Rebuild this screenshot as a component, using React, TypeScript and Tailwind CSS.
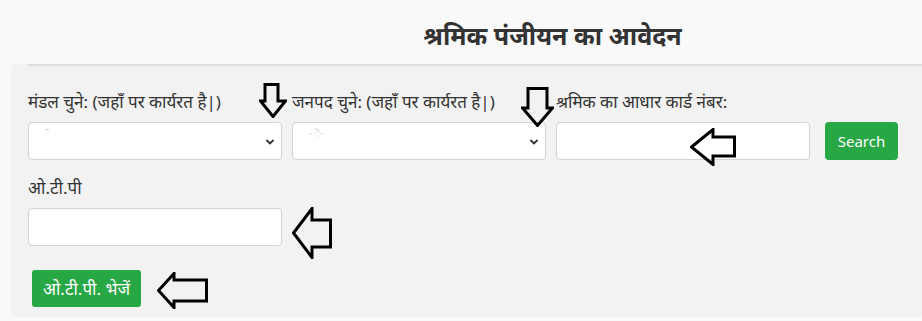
import React from "react"

type LeftProps = { x: number; y: number; w: number; h: number; hb: number; st: number; sb: number }

function LeftArrow({ x, y, w, h, hb, st, sb }: LeftProps) {
  const pts = [
    [1.5, h / 2],
    [hb, 1.5],
    [hb, st],
    [w - 1.5, st],
    [w - 1.5, sb],
    [hb, sb],
    [hb, h - 1.5],
  ]
    .map((p) => p.join(","))
    .join(" ")
  return (
    <svg
      className="absolute pointer-events-none"
      style={{ left: x, top: y }}
      width={w}
      height={h}
      viewBox={`0 0 ${w} ${h}`}
    >
      <polygon points={pts} fill="none" stroke="#000" strokeWidth={3} strokeLinejoin="miter" />
    </svg>
  )
}

type DownProps = { x: number; y: number; w: number; h: number; sl: number; sr: number; hs: number }

function DownArrow({ x, y, w, h, sl, sr, hs }: DownProps) {
  const pts = [
    [sl, 1.5],
    [sr, 1.5],
    [sr, hs],
    [w - 1.5, hs],
    [w / 2, h - 1.5],
    [1.5, hs],
    [sl, hs],
  ]
    .map((p) => p.join(","))
    .join(" ")
  return (
    <svg
      className="absolute pointer-events-none"
      style={{ left: x, top: y }}
      width={w}
      height={h}
      viewBox={`0 0 ${w} ${h}`}
    >
      <polygon points={pts} fill="none" stroke="#000" strokeWidth={3} strokeLinejoin="miter" />
    </svg>
  )
}

function Select({ hint }: { hint: string }) {
  return (
    <div className="relative h-[38px] w-[254px] rounded-[4px] border border-[#ced4da] bg-white">
      <span className="absolute left-[16px] top-[2px] text-[11px] text-[#c8c8c8]">{hint}</span>
      <svg className="absolute right-[6px] top-[15px]" width="10" height="8" viewBox="0 0 10 8">
        <path d="M1.5 2 L5 5.5 L8.5 2" fill="none" stroke="#333" strokeWidth="1.8" />
      </svg>
    </div>
  )
}

function Field({ label, children }: { label: string; children: React.ReactNode }) {
  return (
    <div className="flex w-[254px] flex-col">
      <label className="mb-2 whitespace-nowrap text-[17px] leading-[24px] text-[#333]">{label}</label>
      {children}
    </div>
  )
}

export default function App() {
  return (
    <div className="relative h-[321px] w-[922px] overflow-hidden bg-[#f9f9f9] font-['Noto_Sans',sans-serif]">
      <h2 className="pl-[183px] pt-[20px] text-center text-[25px] font-bold leading-[30px] text-[#333]">
        श्रमिक पंजीयन का आवेदन
      </h2>

      <div className="ml-[12px] mt-[14px] h-[251px] bg-[#f2f2f2] shadow-[0_1px_2px_rgba(0,0,0,0.06)]">
        <div className="ml-[16px] h-[2px] bg-[#dedede]" />
        <div className="pl-[16px] pt-[24px]">
          <div className="flex items-end gap-[10px]">
            <Field label="मंडल चुने: (जहाँ पर कार्यरत है|)">
              <Select hint="ˉ" />
            </Field>
            <Field label="जनपद चुने: (जहाँ पर कार्यरत है|)">
              <Select hint="· ॆ·" />
            </Field>
            <Field label="श्रमिक का आधार कार्ड नंबर:">
              <div className="h-[38px] w-[254px] rounded-[4px] border border-[#ced4da] bg-white" />
            </Field>
            <button className="ml-[5px] h-[38px] w-[73px] rounded-[4px] bg-[#28a745] text-[15px] text-white">
              Search
            </button>
          </div>

          <div className="mt-[16px]">
            <Field label="ओ.टी.पी">
              <div className="h-[38px] w-[254px] rounded-[4px] border border-[#ced4da] bg-white" />
            </Field>
          </div>

          <button className="ml-[4px] mt-[24px] h-[37px] w-[109px] rounded-[3px] bg-[#28a745] text-[17px] text-white">
            ओ.टी.पी. भेजें
          </button>
        </div>
      </div>

      <DownArrow x={259} y={83} w={28} h={35} sl={6} sr={19} hs={18} />
      <DownArrow x={521} y={87} w={33} h={40} sl={7} sr={26} hs={21} />
      <LeftArrow x={690} y={128} w={46} h={38} hb={23} st={9} sb={28} />
      <LeftArrow x={292} y={207} w={40} h={52} hb={20} st={13} sb={40} />
      <LeftArrow x={157} y={272} w={51} h={37} hb={17} st={8} sb={29} />
    </div>
  )
}
